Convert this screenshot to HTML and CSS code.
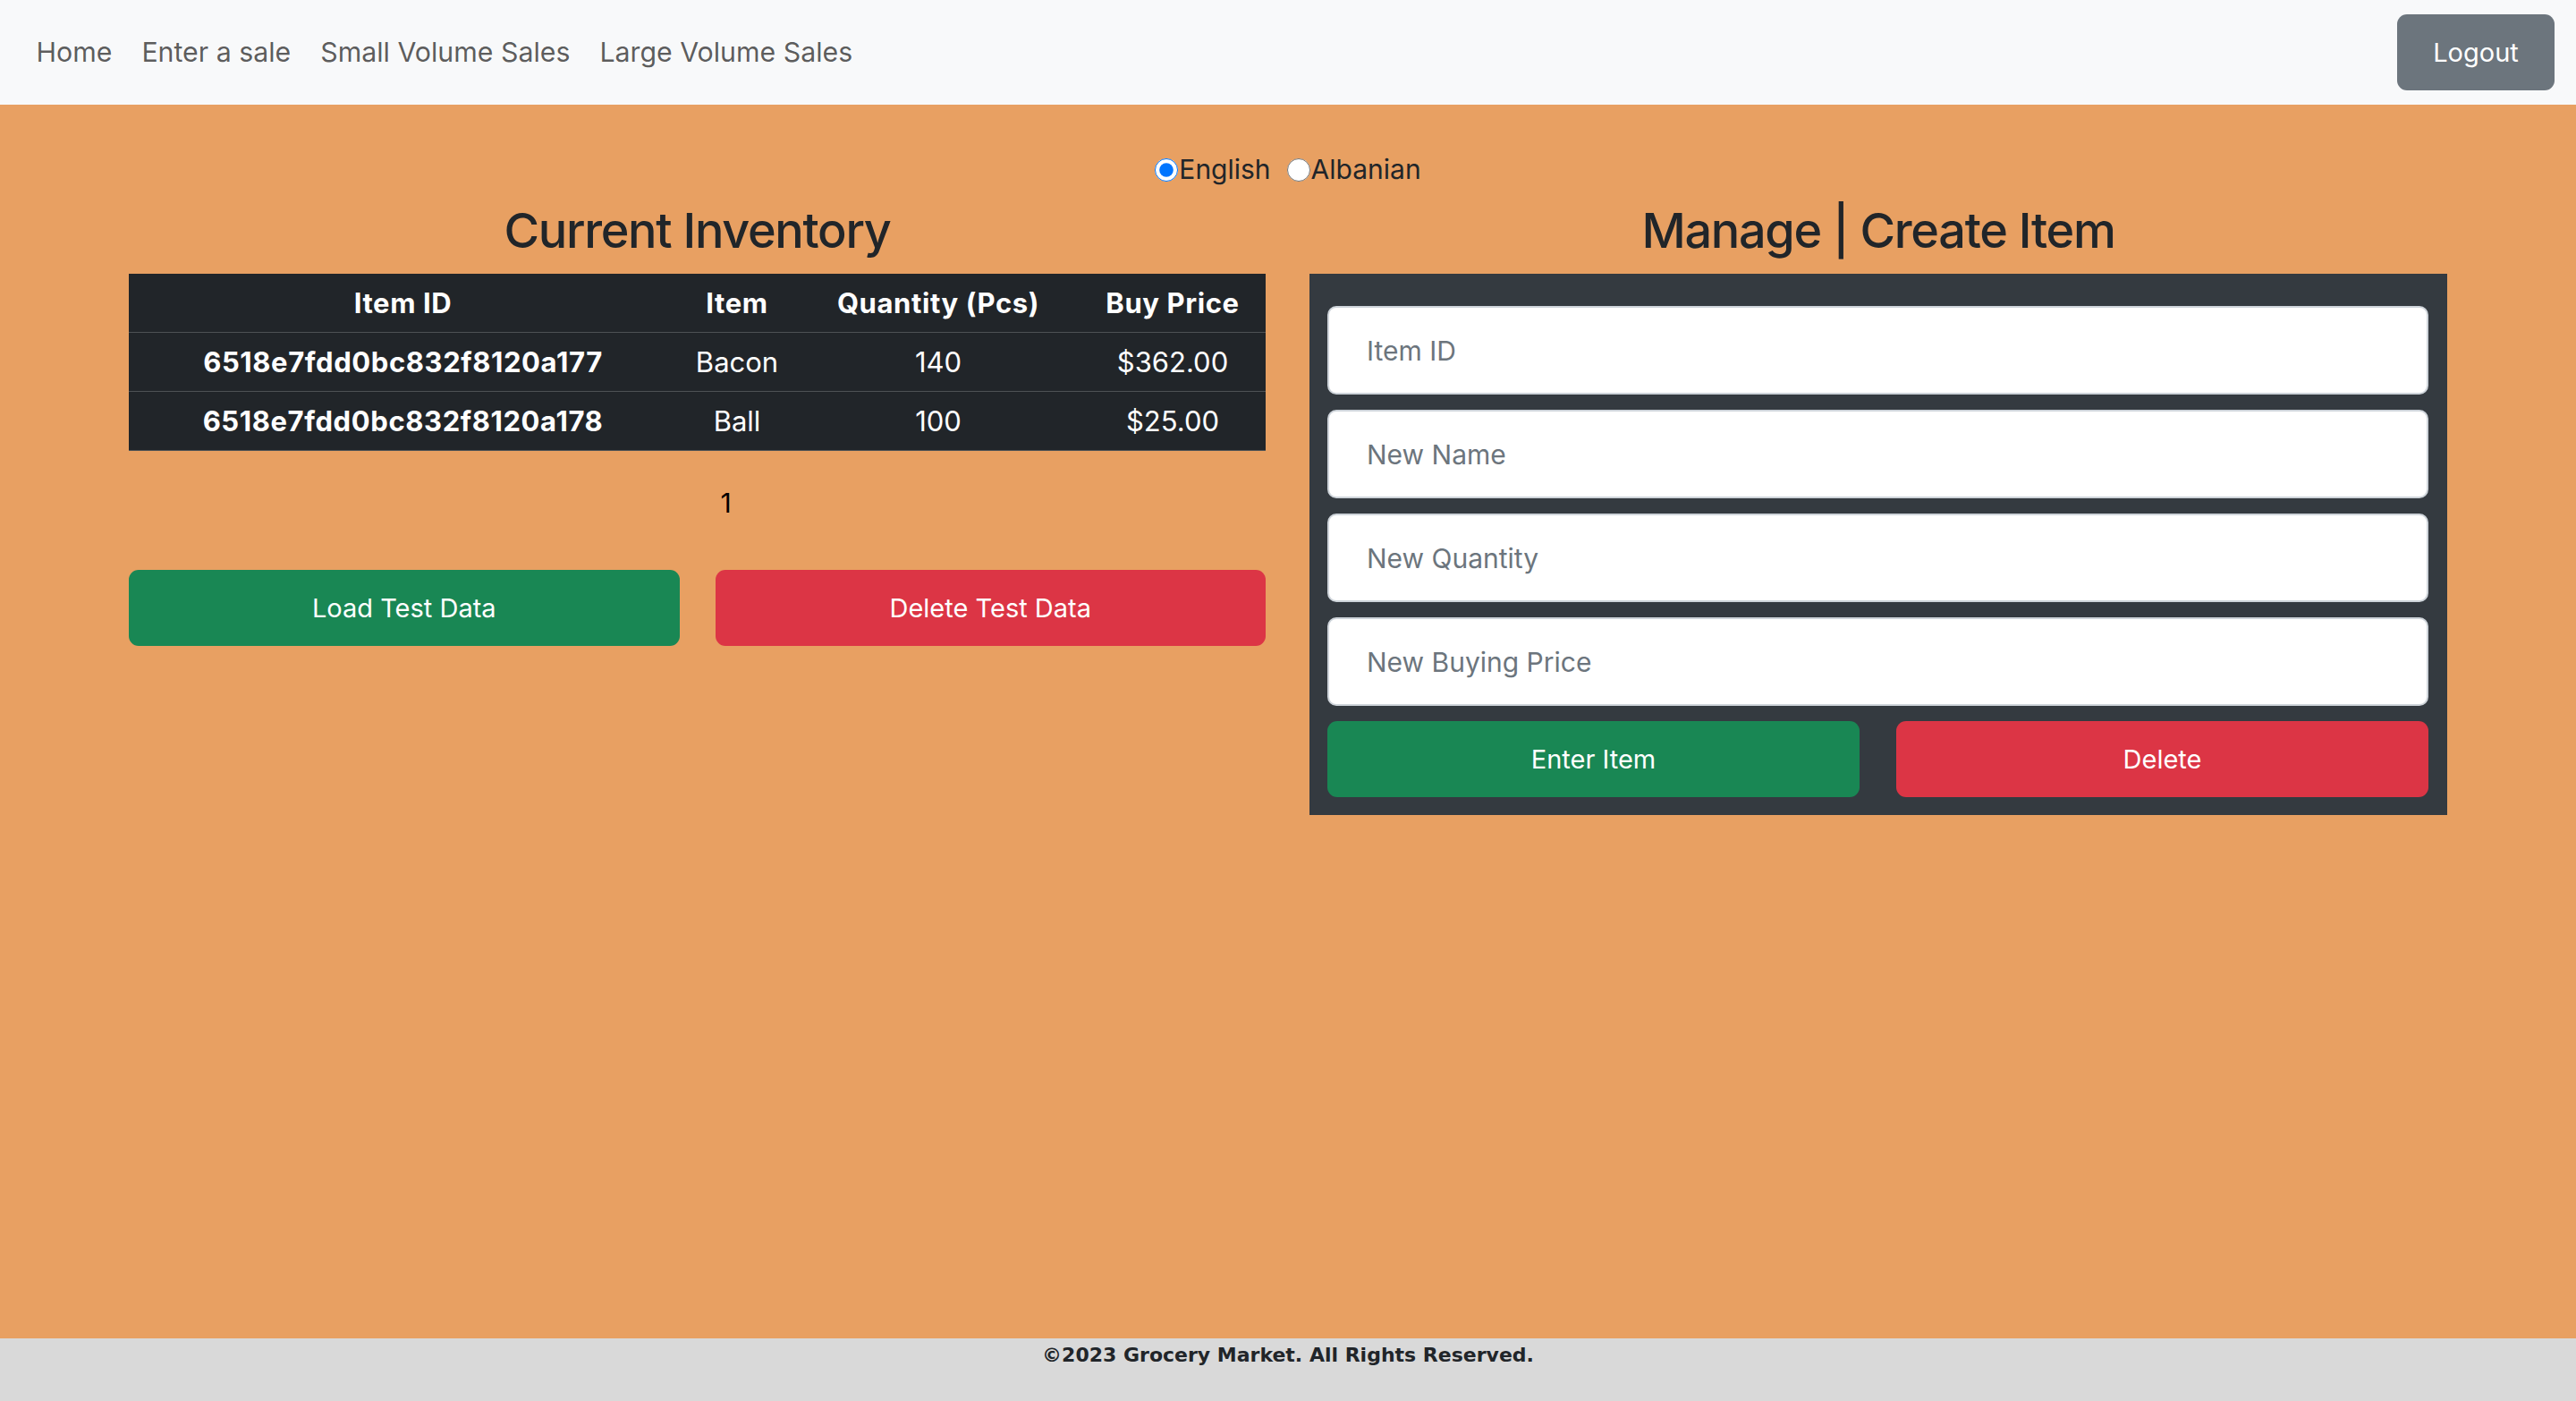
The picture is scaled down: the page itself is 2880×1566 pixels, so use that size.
FILE: index.html
```html
<!DOCTYPE html>
<html lang="en">
<head>
<meta charset="utf-8">
<title>Grocery Market - Inventory</title>
<link rel="stylesheet" href="styles.css">
</head>
<body>
<nav class="navbar">
  <ul class="nav-links">
    <li><a class="nav-link" href="#">Home</a></li>
    <li><a class="nav-link" href="#">Enter a sale</a></li>
    <li><a class="nav-link" href="#">Small Volume Sales</a></li>
    <li><a class="nav-link" href="#">Large Volume Sales</a></li>
  </ul>
  <button class="btn btn-secondary" type="button">Logout</button>
</nav>
<main class="main">
  <div class="lang">
    <label class="lang-option"><input class="radio" type="radio" name="lang" checked>English</label>
    <label class="lang-option"><input class="radio" type="radio" name="lang">Albanian</label>
  </div>
  <div class="columns">
    <section class="col">
      <h2 class="col-title">Current Inventory</h2>
      <table class="inv-table">
        <thead>
          <tr>
            <th class="c-id">Item ID</th>
            <th class="c-item">Item</th>
            <th class="c-qty">Quantity (Pcs)</th>
            <th class="c-price">Buy Price</th>
          </tr>
        </thead>
        <tbody>
          <tr>
            <th>6518e7fdd0bc832f8120a177</th>
            <td>Bacon</td>
            <td>140</td>
            <td>$362.00</td>
          </tr>
          <tr>
            <th>6518e7fdd0bc832f8120a178</th>
            <td>Ball</td>
            <td>100</td>
            <td>$25.00</td>
          </tr>
        </tbody>
      </table>
      <ul class="pagination"><li>1</li></ul>
      <div class="btn-row">
        <button class="btn btn-success" type="button">Load Test Data</button>
        <button class="btn btn-danger" type="button">Delete Test Data</button>
      </div>
    </section>
    <section class="col">
      <h2 class="col-title">Manage | Create Item</h2>
      <form class="panel">
        <input class="field" type="text" placeholder="Item ID">
        <input class="field" type="text" placeholder="New Name">
        <input class="field" type="text" placeholder="New Quantity">
        <input class="field" type="text" placeholder="New Buying Price">
        <div class="btn-row panel-btns">
          <button class="btn btn-success" type="button">Enter Item</button>
          <button class="btn btn-danger" type="button">Delete</button>
        </div>
      </form>
    </section>
  </div>
</main>
<footer class="footer">©2023 Grocery Market. All Rights Reserved.</footer>
</body>
</html>
```
FILE: styles.css
```css
* { box-sizing: border-box; }
html, body { margin: 0; padding: 0; }
body {
  font-family: Inter, "Noto Sans", sans-serif;
  font-size: 30px;
  line-height: 1.5;
  color: #212529;
  background: #e8a062;
  min-height: 100vh;
  display: flex;
  flex-direction: column;
}
.navbar {
  height: 117px;
  background: #f8f9fa;
  display: flex;
  align-items: center;
  justify-content: space-between;
  padding: 0 24px 0 24px;
}
.nav-links {
  list-style: none;
  margin: 0;
  padding: 0;
  display: flex;
}
.nav-link {
  display: block;
  padding: 10px 16.5px;
  font-size: 30.3px;
  color: rgba(0,0,0,.65);
  text-decoration: none;
}
.btn {
  font-family: inherit;
  font-size: 29px;
  line-height: 45px;
  border: 1px solid transparent;
  border-radius: 11px;
  padding: 19px 20px;
  color: #fff;
  cursor: pointer;
}
.btn-secondary { background: #6c757d; width: 176px; }
.btn-success { background: #198754; }
.btn-danger { background: #dc3545; }
.main { flex: 1; padding-top: 50px; }
.lang {
  display: flex;
  justify-content: center;
  height: 45px;
  margin-bottom: 13px;
}
.lang-option {
  display: flex;
  align-items: center;
  margin-right: 18px;
}
.lang-option:last-child { margin-right: 0; }
.radio {
  width: 26px;
  height: 26px;
  margin: 0 1px 0 0;
  accent-color: #0075ff;
}
.columns {
  display: grid;
  grid-template-columns: 1271px 1272px;
  column-gap: 49px;
  padding: 0 144px;
}
.col-title {
  font-size: 54px;
  font-weight: 500;
  line-height: 65px;
  letter-spacing: -1.3px;
  margin: 0 0 16px;
  text-align: center;
}
.inv-table {
  width: 100%;
  border-collapse: collapse;
  background: #212529;
  color: #fff;
  text-align: center;
  font-size: 31px;
}
.inv-table th, .inv-table td {
  padding: 10px 8px;
  border-bottom: 1px solid #4d5154;
  font-weight: 400;
  line-height: 45px;
}
.inv-table th { font-weight: 700; letter-spacing: 0.6px; }
.c-id { width: 613px; }
.c-item { width: 134px; }
.c-qty { width: 316px; }
.c-price { width: 208px; }
.pagination {
  list-style: none;
  margin: 36px 0 52px;
  padding: 0 0 0 64px;
  text-align: center;
  color: #000;
}
.btn-row {
  display: grid;
  grid-template-columns: 1fr 1fr;
  column-gap: 40px;
}
.panel {
  background: #343a40;
  padding: 36px 21px 20px 20px;
  margin: 0;
}
.field {
  display: block;
  width: 100%;
  height: 99px;
  margin: 0 0 17px;
  padding: 26px 42px;
  font-family: inherit;
  font-size: 30px;
  line-height: 45px;
  color: #212529;
  background: #fff;
  border: 2px solid #ced4da;
  border-radius: 10px;
}
.field::placeholder { color: #6c757d; }
.panel-btns { column-gap: 41px; }
.footer {
  height: 70px;
  background: #d9d9d9;
  text-align: center;
  font-family: "DejaVu Sans", sans-serif;
  font-weight: 700;
  font-size: 22px;
  line-height: 1.2;
  padding-top: 6px;
}
```
